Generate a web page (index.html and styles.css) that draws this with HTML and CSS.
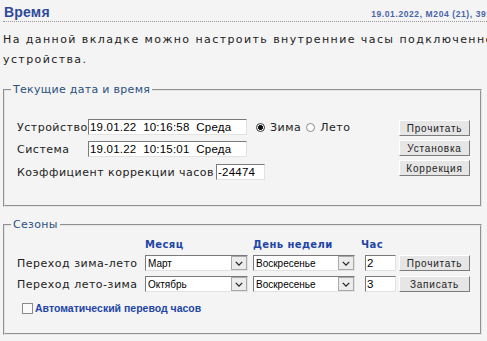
FILE: index.html
```html
<!DOCTYPE html>
<html lang="ru">
<head>
	<meta charset="UTF-8">
	<title>Время</title>
	<link rel="stylesheet" href="styles.css">
</head>
<body>
	<div id="page">
		<div class="head">
			<h1>Время</h1>
			<span class="stamp">19.01.2022, M204 (21), 3912</span>
		</div>
		<p class="intro">На данной вкладке можно настроить внутренние часы подключенного устройства.</p>

		<fieldset class="box clock">
			<legend>Текущие дата и время</legend>
			<div class="clock-rows">
				<div class="row">
					<label class="lbl" for="dev">Устройство</label>
					<input id="dev" class="field wide" value="19.01.22  10:16:58  Среда">
					<span class="season">
						<input type="radio" name="season" id="winter" checked>
						<label for="winter">Зима</label>
						<input type="radio" name="season" id="summer">
						<label for="summer">Лето</label>
					</span>
				</div>
				<div class="row">
					<label class="lbl" for="sys">Система</label>
					<input id="sys" class="field wide" value="19.01.22  10:15:01  Среда">
				</div>
				<div class="row row-corr">
					<label for="corr">Коэффициент коррекции часов</label>
					<input id="corr" class="field corr" value="-24474">
				</div>
			</div>
			<div class="btns">
				<button>Прочитать</button>
				<button>Установка</button>
				<button>Коррекция</button>
			</div>
		</fieldset>

		<fieldset class="box seasons">
			<legend>Сезоны</legend>
			<div class="grid">
				<span></span>
				<span class="col">Месяц</span>
				<span class="col">День недели</span>
				<span class="col hour">Час</span>
				<span></span>

				<label>Переход зима-лето</label>
				<span class="sel m"><select><option>Март</option></select><i class="arr"><svg viewBox="0 0 10 6"><path d="M1 1l4 4 4-4" /></svg></i></span>
				<span class="sel d"><select><option>Воскресенье</option></select><i class="arr"><svg viewBox="0 0 10 6"><path d="M1 1l4 4 4-4" /></svg></i></span>
				<input class="field hr" value="2">
				<button>Прочитать</button>

				<label>Переход лето-зима</label>
				<span class="sel m"><select><option>Октябрь</option></select><i class="arr"><svg viewBox="0 0 10 6"><path d="M1 1l4 4 4-4" /></svg></i></span>
				<span class="sel d"><select><option>Воскресенье</option></select><i class="arr"><svg viewBox="0 0 10 6"><path d="M1 1l4 4 4-4" /></svg></i></span>
				<input class="field hr" value="3">
				<button>Записать</button>

				<div class="auto">
					<input type="checkbox" id="auto">
					<label for="auto">Автоматический перевод часов</label>
				</div>
			</div>
		</fieldset>
	</div>
</body>
</html>
```

FILE: styles.css
```css
html,
body {
	margin: 0;
	padding: 0;
	overflow: hidden;
	background-color: #f4f4f4;
}

body {
	font-family: "DejaVu Sans", Verdana, sans-serif;
	font-size: 11px;
	letter-spacing: .5px;
	color: #222;
}

#page {
	width: 506px;
	padding-left: 3px;
}

.head {
	display: flex;
	justify-content: space-between;
	align-items: flex-end;
	padding-top: 4px;
	padding-bottom: 1px;
	border-bottom: 1px dotted #999;
}

.head h1 {
	margin: 0 0 0 1px;
	font-family: "Liberation Sans", Arial, sans-serif;
	font-size: 14px;
	line-height: 16px;
	letter-spacing: .2px;
	color: #2d4a9a;
}

.stamp {
	font-family: "Liberation Sans", Arial, sans-serif;
	font-size: 8.5px;
	font-weight: bold;
	line-height: 9px;
	letter-spacing: .6px;
	color: #4a64a8;
	margin: 0 12px 1px 0;
}

.intro {
	margin: 8px 0 0;
	line-height: 20px;
	letter-spacing: 1.4px;
	text-align: justify;
}

.box {
	box-sizing: border-box;
	width: 479px;
	margin: 0;
	border: 2px groove #e4e4e4;
}

.box legend {
	padding: 0 2px;
	margin-left: -6px;
	line-height: 12px;
	letter-spacing: .3px;
	color: #2b5080;
}

.clock {
	margin-top: 14px;
	padding: 23px 10px 25px 12px;
	display: flex;
	justify-content: space-between;
	align-items: flex-start;
}

.clock-rows {
	display: flex;
	flex-direction: column;
	gap: 6px;
}

.row {
	display: flex;
	align-items: center;
	height: 16px;
}

.row-corr {
	margin-top: 1px;
}

.lbl {
	width: 71px;
}

.field {
	box-sizing: border-box;
	height: 16px;
	margin: 0;
	padding: 0 1px;
	border: 1px solid;
	border-color: #7a7a7a #e2e2e2 #e2e2e2 #7a7a7a;
	background: #fff;
	font-family: "Liberation Sans", Arial, sans-serif;
	font-size: 11.5px;
	letter-spacing: .2px;
	color: #000;
	outline: none;
}

.wide {
	width: 159px;
}

.corr {
	width: 49px;
	margin-left: 2px;
}

.season {
	display: flex;
	align-items: center;
	margin-left: 9px;
}

.season label {
	margin: 0 5px 0 5px;
}

input[type=radio] {
	appearance: none;
	-webkit-appearance: none;
	width: 9px;
	height: 9px;
	margin: 0;
	border: 1px solid #8a8a8a;
	border-radius: 50%;
	background: #fff;
}

input[type=radio]:checked {
	border-color: #333;
	background: radial-gradient(circle, #111 0, #111 2.2px, #fff 2.7px);
}

.btns {
	display: flex;
	flex-direction: column;
	gap: 4px;
	margin-top: 1px;
}

button {
	box-sizing: border-box;
	width: 71px;
	height: 16px;
	margin: 0;
	padding: 0;
	border: 1px solid;
	border-color: #fff #7c7c7c #7c7c7c #fff;
	background: #e6e6e6;
	font-family: "Liberation Sans", Arial, sans-serif;
	font-size: 10px;
	letter-spacing: .8px;
	color: #222;
}

.seasons {
	margin-top: 12px;
	padding: 3px 10px 20px 12px;
}

.grid {
	display: grid;
	grid-template-columns: 128px 108px 112px 34px 71px;
	grid-auto-rows: 16px;
	row-gap: 5px;
	align-items: center;
}

.grid .col {
	font-weight: bold;
	font-size: 10px;
	letter-spacing: .4px;
	color: #1f45a6;
	align-self: end;
}

.grid .hour {
	margin-left: -4px;
}

.sel {
	position: relative;
	display: block;
	height: 16px;
}

.sel.m {
	width: 103px;
}

.sel.d {
	width: 102px;
}

.sel select {
	appearance: none;
	-webkit-appearance: none;
	box-sizing: border-box;
	width: 100%;
	height: 16px;
	margin: 0;
	padding: 0 2px;
	border: 1px solid;
	border-color: #7a7a7a #e2e2e2 #e2e2e2 #7a7a7a;
	background: #fff;
	font-family: "Liberation Sans", Arial, sans-serif;
	font-size: 10px;
	color: #000;
	outline: none;
}

.arr {
	position: absolute;
	top: 1px;
	right: 1px;
	width: 14px;
	height: 12px;
	border: 1px solid #a8a8a8;
	background: #ececec;
	display: flex;
	align-items: center;
	justify-content: center;
}

.arr svg {
	width: 8px;
	height: 5px;
	fill: none;
	stroke: #222;
	stroke-width: 1.6;
}

.hr {
	width: 31px;
}

.auto {
	grid-column: 1 / -1;
	display: flex;
	align-items: center;
	margin-top: 6px;
	padding-left: 5px;
}

.auto input {
	appearance: none;
	-webkit-appearance: none;
	width: 11px;
	height: 11px;
	margin: 0 2px 0 0;
	border: 1px solid #8a8a8a;
	background: #fafafa;
}

.auto label {
	font-family: "Liberation Sans", Arial, sans-serif;
	font-weight: bold;
	font-size: 10.5px;
	letter-spacing: 0;
	color: #1f45a6;
}
```
